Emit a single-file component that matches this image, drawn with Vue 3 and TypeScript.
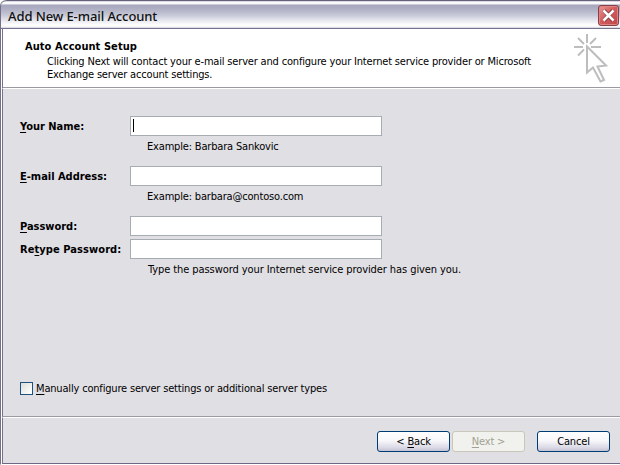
<script setup lang="ts">
import { ref } from 'vue'

interface Field {
  id: string
  before: string
  key: string
  after: string
  type: string
  hint: string
}

const fields: Field[] = [
  { id: 'name', before: '', key: 'Y', after: 'our Name:', type: 'text', hint: 'Example: Barbara Sankovic' },
  { id: 'email', before: '', key: 'E', after: '-mail Address:', type: 'text', hint: 'Example: barbara@contoso.com' },
  { id: 'password', before: '', key: 'P', after: 'assword:', type: 'password', hint: '' },
  { id: 'retype', before: 'Re', key: 't', after: 'ype Password:', type: 'password', hint: 'Type the password your Internet service provider has given you.' },
]

const values = ref<Record<string, string>>({ name: '', email: '', password: '', retype: '' })
const manual = ref(false)
const focused = ref('name')
</script>

<template>
  <div class="window">
    <header class="titlebar">
      <h1>Add New E-mail Account</h1>
      <button class="close" aria-label="Close">
        <svg width="13" height="13" viewBox="0 0 13 13">
          <path d="M2 1.5 11 11.5M11 1.5 2 11.5" stroke="#7d2d33" stroke-width="4" />
          <path d="M1.5 1.5 11.5 11.5M11.5 1.5 1.5 11.5" stroke="#fff" stroke-width="2.6" />
        </svg>
      </button>
    </header>

    <section class="banner">
      <div class="intro">
        <h2>Auto Account Setup</h2>
        <p>Clicking Next will contact your e-mail server and configure your Internet service provider or Microsoft<br />Exchange server account settings.</p>
      </div>
      <svg class="pointer" width="36" height="52" viewBox="0 0 36 52" fill="none" stroke="#bdbdbd" stroke-width="2">
        <path d="M15 2V11M2 15H11M19 15H29M6 6 12 12M24 6 18 12M6 23.500 12 17.500" />
        <path d="M15 14.500V40.500L21 35.500 28.500 49.500 32 48 25.500 34.500 34 33.500Z" />
      </svg>
    </section>

    <main class="body">
      <div v-for="f in fields" :key="f.id" class="field" :class="f.id">
        <label :for="f.id">{{ f.before }}<u>{{ f.key }}</u>{{ f.after }}</label>
        <div class="box">
          <input :id="f.id" v-model="values[f.id]" :type="f.type" @focus="focused = f.id" />
          <i v-if="focused === f.id && !values[f.id]" class="caret"></i>
        </div>
        <p v-if="f.hint" class="hint">{{ f.hint }}</p>
      </div>
      <label class="manual">
        <input v-model="manual" type="checkbox" />
        <span><u>M</u>anually configure server settings or additional server types</span>
      </label>
    </main>

    <footer class="actions">
      <button>&lt; <u>B</u>ack</button>
      <button disabled><u>N</u>ext &gt;</button>
      <button class="cancel">Cancel</button>
    </footer>
  </div>
</template>

<style>
body {
  margin: 0;
  overflow: hidden;
}
</style>

<style scoped>
* {
  box-sizing: border-box;
}
.window {
  width: 620px;
  height: 465px;
  display: flex;
  flex-direction: column;
  border-left: 1px solid #737087;
  border-bottom: 1px solid #fff;
  border-top-left-radius: 6px;
  background: #fff;
  color: #000;
  font: 11px/13px "DejaVu Sans Condensed", "DejaVu Sans", sans-serif;
  font-stretch: condensed;
  letter-spacing: -0.177px;
}
h1, h2, p {
  margin: 0;
}
u {
  text-underline-offset: 2px;
  text-decoration-thickness: 1px;
  text-decoration-skip-ink: none;
}
.titlebar {
  height: 29px;
  flex: none;
  display: flex;
  justify-content: space-between;
  padding: 5px 1px 0 7px;
  border-top: 1px solid #65627b;
  border-bottom: 1px solid #77738f;
  border-top-left-radius: 6px;
  background: linear-gradient(#b4b3c6 0, #fff 1px, #f4f4f8 3px, #a6a6bd 4px, #b2b3c6 9px, #c6c7d6 14px, #e9eaf0 20px, #fff 24px, #f5f5f8 26px, #c5c4d1 27px);
}
h1 {
  margin-top: 1px;
  font: 500 13px/18px "Noto Sans", sans-serif;
  letter-spacing: -0.09px;
  color: #111;
}
.close {
  width: 21px;
  height: 21px;
  margin-top: -1px;
  padding: 3px;
  border: 1px solid #8b3d47;
  border-radius: 3px;
  background: linear-gradient(135deg, #e49a97, #d45e5e 45%, #bd4449);
  box-shadow: inset 0 0 0 1px #dc8584;
}
.close svg {
  display: block;
}
.banner {
  height: 60px;
  flex: none;
  display: flex;
  justify-content: space-between;
  margin-left: 1px;
  padding: 0 12px 0 22px;
  border-left: 1px solid #77738f;
  border-bottom: 1px solid #fff;
  background: linear-gradient(#9b9aa2, #9b9aa2) bottom / 100% 1px no-repeat #fff;
}
.intro {
  padding-top: 11px;
}
h2 {
  font-size: 11px;
  line-height: 14px;
  letter-spacing: 0.06px;
}
.intro p {
  margin-left: 22px;
  padding-top: 1px;
  white-space: nowrap;
}
.pointer {
  flex: none;
  margin-top: 3px;
}
.body {
  height: 328px;
  flex: none;
  margin-left: 1px;
  padding: 27px 0 0 17px;
  border-left: 1px solid #77738f;
  border-bottom: 1px solid #9b9aa2;
  background: #e0dfe4;
}
.field {
  display: grid;
  grid-template-columns: 110px 252px;
  grid-template-rows: 20px auto;
}
.field.name,
.field.email {
  height: 50px;
}
.field.password {
  height: 23px;
}
.field.retype {
  height: 143px;
}
.field label {
  padding-top: 4px;
  font-weight: 700;
  letter-spacing: -0.02px;
  white-space: nowrap;
}
.field.retype label {
  letter-spacing: 0.08px;
}
.box {
  position: relative;
}
.box input {
  display: block;
  width: 252px;
  height: 20px;
  padding: 1px 3px;
  border: 1px solid #a5acb2;
  background: #fff;
  font: inherit;
  outline: none;
}
.caret {
  position: absolute;
  left: 3px;
  top: 3px;
  width: 1px;
  height: 13px;
  background: #000;
}
.hint {
  grid-column: 2;
  padding: 4px 0 0 17px;
  white-space: nowrap;
}
.retype .hint {
  padding-left: 18px;
  letter-spacing: -0.083px;
}
.manual {
  display: flex;
  gap: 3px;
}
.manual input {
  appearance: none;
  width: 13px;
  height: 13px;
  margin: 0;
  border: 1px solid #1c5180;
  background: linear-gradient(135deg, #dcdcd7, #fff 90%);
}
.actions {
  flex: 1;
  display: flex;
  align-items: flex-start;
  gap: 2px;
  margin-left: 1px;
  padding: 13px 0 0 374px;
  border-left: 1px solid #77738f;
  border-top: 1px solid #fff;
  border-bottom: 1px solid #6c6885;
  background: #e0dfe4;
}
.actions button {
  width: 73px;
  height: 21px;
  padding: 0;
  border: 1px solid #003c74;
  border-radius: 3px;
  background: linear-gradient(#fff, #f8f8fb 45%, #dcdbe7 80%, #c5c3d5);
  color: #000;
  font: inherit;
  letter-spacing: inherit;
}
.actions button:disabled {
  border-color: #c9c7ba;
  background: #f1f1ed;
  color: #a1a192;
}
.actions .cancel {
  margin-left: 10px;
}
</style>
